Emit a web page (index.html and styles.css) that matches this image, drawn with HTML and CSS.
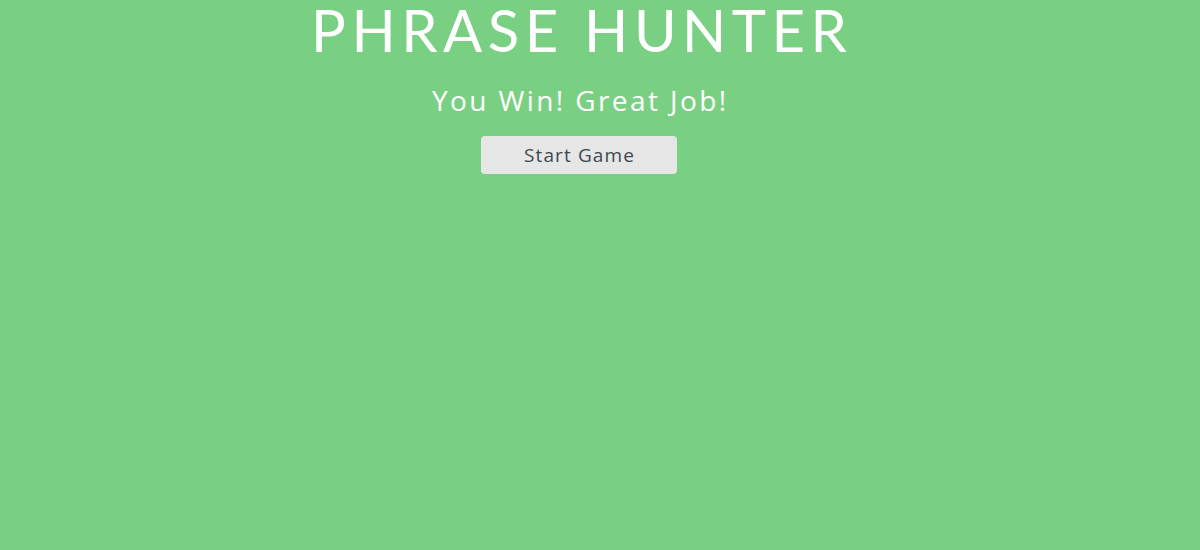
FILE: index.html
```html
<!DOCTYPE html>
<html lang="en">
<head>
<meta charset="utf-8">
<title>Phrase Hunter</title>
<link rel="stylesheet" href="styles.css">
</head>
<body>
  <div class="overlay win">
    <h2 class="title">PHRASE HUNTER</h2>
    <h1 class="game-over-message">You Win! Great Job!</h1>
    <button class="btn-reset" type="button">Start Game</button>
  </div>
</body>
</html>
```
FILE: styles.css
```css
html, body {
  margin: 0;
  padding: 0;
  height: 100%;
}

body {
  background: #7ad082;
  font-family: "Open Sans", "Noto Sans", sans-serif;
}

.overlay {
  display: flex;
  flex-direction: column;
  align-items: center;
  padding-right: 42px;
}

.title {
  font-family: Lato, "Open Sans", sans-serif;
  font-weight: 400;
  font-size: 58px;
  line-height: 60px;
  margin: 0;
  color: #ffffff;
  letter-spacing: 5.5px;
  padding-left: 5.5px;
}

.game-over-message {
  font-weight: 400;
  font-size: 28px;
  line-height: 36px;
  margin: 22px 0 0;
  color: #ffffff;
  letter-spacing: 2.4px;
  padding-left: 2.4px;
}

.btn-reset {
  margin-top: 18px;
  width: 196px;
  height: 38px;
  border: none;
  border-radius: 4px;
  background: #e6e6e6;
  color: #3c4a50;
  font-family: "Open Sans", "Noto Sans", sans-serif;
  font-size: 19px;
  letter-spacing: 1.1px;
  padding: 0 0 0 1px;
}
```
